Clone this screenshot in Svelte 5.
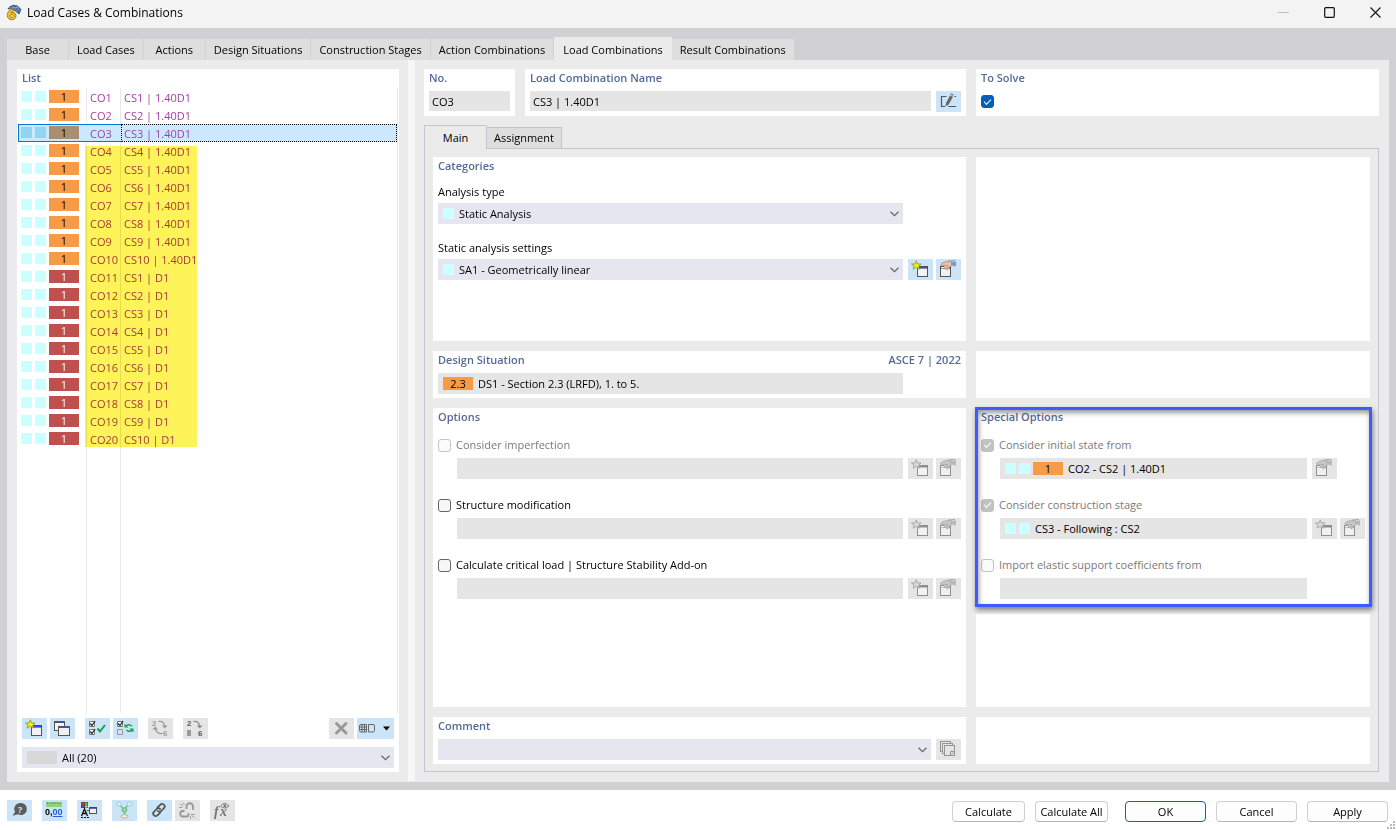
<script lang="ts">
  type Combo = { id: number; no: string; name: string; kind: 'uls' | 'sls' };

  const tabs = [
    'Base',
    'Load Cases',
    'Actions',
    'Design Situations',
    'Construction Stages',
    'Action Combinations',
    'Load Combinations',
    'Result Combinations'
  ];

  // ten strength combinations, then ten serviceability ones
  const combos: Combo[] = Array.from({ length: 20 }, (_, i) => ({
    id: i + 1,
    no: `CO${i + 1}`,
    name: i < 10 ? `CS${i + 1} | 1.40D1` : `CS${i - 9} | D1`,
    kind: i < 10 ? 'uls' : 'sls'
  }));

  const options = [
    { id: 'imperfection', label: 'Consider imperfection', disabled: true },
    { id: 'structure', label: 'Structure modification', disabled: false },
    { id: 'critical', label: 'Calculate critical load | Structure Stability Add-on', disabled: false }
  ];

  let activeTab = 'Load Combinations';
  let activeSub = 'Main';
  let selected = 3;
  let toSolve = true;

  $: current = combos.find(c => c.id === selected) ?? combos[0];
</script>

{#snippet chevron()}
  <svg class="chevron" width="10" height="6" viewBox="0 0 10 6"><path d="M1.5 .8 5.5 4.6 9.500 .8" fill="none" stroke="#666" stroke-width="1.2" /></svg>
{/snippet}

{#snippet iconNew(off = false)}
  <svg width="25" height="21" viewBox="0 0 25 21">
    <rect x="9.5" y="7.5" width="10" height="10" fill="#f2f2f2" stroke={off ? '#8f8f8f' : '#555'} />
    <path d="M9 8.5h11" stroke={off ? '#8f8f8f' : '#444'} stroke-width="2" />
    {#if !off}<path d="M12 8.5h7" stroke="#2f55e0" stroke-width="1.4" />{/if}
    <path d="M8.3 1.8 9.5 5h3.6l-2.4 2 1 3.2-3.4-2-3.2 2 1-3.2-2.6-2h3.6z" fill={off ? '#dcdcdc' : '#fff200'} stroke={off ? '#9d9d9d' : '#86903a'} stroke-width=".8" />
  </svg>
{/snippet}

{#snippet iconEdit(off = false)}
  <svg width="25" height="21" viewBox="0 0 25 21">
    <rect x="4.5" y="7.5" width="10" height="10" fill="#f0f0f0" stroke={off ? '#8f8f8f' : '#555'} />
    <path d="M4 8.5h11" stroke={off ? '#8f8f8f' : '#444'} stroke-width="2" />
    <path d="M5 8.5h3" stroke="#fff" />
    <path d="M4.500 5.500 7 3.500 10.500 2.500 15.500 2.800v4l-2.300 1.700-1 2-1.400.3-.8-1.700-1.500.5L7.600 7.600l1-1.400-2.600.6z" fill={off ? '#c6c6c6' : '#e6c1a4'} stroke={off ? '#a2a2a2' : '#a98068'} stroke-width=".7" />
    <path d="M9.500 6.500h2.500M10.500 8.200h2" stroke={off ? '#999' : '#a98068'} stroke-width=".6" />
    <path d="M15.700 3 20 2.200v5.300l-4.300-.9z" fill={off ? '#b8b8b8' : '#6f9ddb'} />
    <path d="M12 2 19 1.500" stroke={off ? '#999' : '#8a8a8a'} stroke-width=".8" />
  </svg>
{/snippet}

{#snippet swatches()}
  <span class="swatch"></span><span class="swatch"></span>
{/snippet}

<div class="window">
  <header class="titlebar">
    <svg class="logo" width="16" height="17" viewBox="0 0 16 17">
      <path d="M2 5C4 1.5 8 .5 11.5 2L15 5.5 13 10 9.5 7 5 4.5z" fill="#42699b" stroke="#2d3f58" stroke-width=".8" />
      <path d="M6 1.5 12 8M9.5 1.5 14.5 7.5M3.5 4 12.5 3.5" stroke="#9db7d6" stroke-width=".7" />
      <path d="M7.5 4.8C3 5.6 1 8.5 1.3 11.6 1.7 17 9.6 17.2 10 12c.2-3-2.5-4.2-5-3.4C5.7 7.4 6.7 6.8 8.3 6.8z" fill="#f2c21c" stroke="#8a6a10" stroke-width=".8" />
      <circle cx="5.7" cy="12" r="1.5" fill="#fff" stroke="#8a6a10" stroke-width=".8" />
    </svg>
    <h1>Load Cases &amp; Combinations</h1>
    <div class="win-buttons">
      <button aria-label="Minimize" disabled><svg width="11" height="11"><path d="M0 5.5h11" stroke="#bcbcbc" /></svg></button>
      <button aria-label="Maximize"><svg width="11" height="11"><rect x=".7" y=".7" width="9.600" height="9.6" rx="1" fill="none" stroke="#111" stroke-width="1.2" /></svg></button>
      <button aria-label="Close"><svg width="11" height="11"><path d="m.5.5 10 10M10.5.5l-10 10" stroke="#111" stroke-width="1.1" /></svg></button>
    </div>
  </header>

  <div class="body">
    <nav class="tabs">
      {#each tabs as tab (tab)}
        <button class:active={tab === activeTab} on:click={() => (activeTab = tab)}>{tab}</button>
      {/each}
    </nav>

    <div class="page">
      <section class="panel list">
        <h2>List</h2>
        <div class="list-scroll">
          <table>
            <tbody>
              {#each combos as c (c.id)}
                <tr class:selected={c.id === selected} on:click={() => (selected = c.id)}>
                  <td class="marks">
                    <div>{@render swatches()}<span class="badge {c.kind}">1</span></div>
                  </td>
                  <td class="no">{c.no}</td>
                  <td class="name">{c.name}</td>
                </tr>
              {/each}
            </tbody>
          </table>
          <div class="marker"></div>
        </div>

        <div class="toolbar">
          <button class="icon" aria-label="New">{@render iconNew()}</button>
          <button class="icon" aria-label="Copy">
            <svg width="25" height="21" viewBox="0 0 25 21">
              <rect x="4.5" y="3.5" width="10" height="9" fill="#f4f4f4" stroke="#555" />
              <path d="M4 4h11" stroke="#555" stroke-width="2" /><path d="M8 4h6" stroke="#2f55e0" stroke-width="1.2" />
              <rect x="8.5" y="8.5" width="11" height="9" fill="#f0f0f0" stroke="#555" />
              <path d="M8 9h12" stroke="#555" stroke-width="2" /><path d="M12 9h7" stroke="#2f55e0" stroke-width="1.2" />
            </svg>
          </button>
          <button class="icon split" aria-label="Select all">
            <svg width="25" height="21" viewBox="0 0 25 21" fill="none">
              <path d="M4.5 3.5h5v5h-5zM4.5 11.500h5v5h-5z" fill="#fff" stroke="#777" />
              <path d="M5 5.5 7 7.5 10 3M5 13.5l2 2 3-4.5" stroke="#222" stroke-width="1.2" />
              <path d="m12.5 10.5 2.5 3 5-6.5" stroke="#16a24a" stroke-width="2" />
            </svg>
          </button>
          <button class="icon" aria-label="Invert selection">
            <svg width="25" height="21" viewBox="0 0 25 21" fill="none">
              <path d="M4.5 3.5h5v5h-5z" fill="#fff" stroke="#777" /><path d="M4.5 11.5h5v5h-5z" stroke="#999" />
              <path d="M5 5.5 7 7.5 10 3" stroke="#222" stroke-width="1.2" />
              <path d="M13 8c1.500-1.600 4-1.500 6 .2M19 12.300c-1.500 1.200-3.500 1.200-5.500-.2" stroke="#16a24a" stroke-width="1.5" />
              <path d="M11.5 5.500v4h4zM20.500 14.500v-4h-4z" fill="#16a24a" />
            </svg>
          </button>
          <button class="icon split" aria-label="Renumber" disabled>
            <svg width="25" height="21" viewBox="0 0 25 21">
              <text x="4" y="8" class="num" fill="#999">2</text><text x="15" y="18" class="num" fill="#999">6</text>
              <path d="M10.5 3.5c4-.5 6 1.5 6 5.5M14.5 15.5c-4 .5-7-1.500-7-5.500" fill="none" stroke="#999" stroke-width="1.2" />
              <path d="M14 7.500h5.500L16.700 10.500zM4.500 11.500H10L7.300 8.500z" fill="#999" />
            </svg>
          </button>
          <button class="icon split" aria-label="Renumber selected" disabled>
            <svg width="25" height="21" viewBox="0 0 25 21">
              <text x="4" y="8" class="num" fill="#555">2</text><text x="15" y="18" class="num" fill="#555">6</text>
              <path d="M10.5 3.5c4-.5 6 1.5 6 5.5" fill="none" stroke="#8a8a8a" stroke-width="1.2" />
              <path d="M14 7.5h5.5L16.7 10.5z" fill="#8a8a8a" /><rect x="4" y="12" width="4" height="6" fill="#999" />
            </svg>
          </button>
          <span class="grow"></span>
          <button class="icon" aria-label="Delete" disabled>
            <svg width="25" height="21" viewBox="0 0 25 21"><path d="m7.5 5.5 9.5 9.500M17 5.500 7.500 15" stroke="#999" stroke-width="3" stroke-linecap="round" /></svg>
          </button>
          <button class="icon wide" aria-label="View">
            <svg width="37" height="21" viewBox="0 0 37 21" fill="none">
              <path d="M4 6.500h5.500V14H4Q2.500 14 2.500 12.500V8Q2.500 6.500 4 6.500M2.500 9h7M2.500 11.500h7M5 6.500V14M7.500 6.500V14" stroke="#666" />
              <path d="M11.5 6.500H16Q17.500 6.500 17.500 8v4.500Q17.500 14 16 14h-4.500z" stroke="#666" />
              <path d="M26 8.500h7L29.500 12.500z" fill="#000" />
            </svg>
          </button>
        </div>

        <div class="combo filter">
          <span class="badge none"></span>
          <select aria-label="Filter"><option>All (20)</option></select>
          {@render chevron()}
        </div>
      </section>

      <div class="splitter"></div>

      <main>
        <div class="row top">
          <div class="left">
            <section class="panel number">
              <h2><label for="co-no">No.</label></h2>
              <input id="co-no" class="field" readonly value={current.no} />
            </section>
            <section class="panel title">
              <h2><label for="co-name">Load Combination Name</label></h2>
              <div class="line">
                <input id="co-name" class="field" readonly value={current.name} />
                <button class="icon" aria-label="Edit name">
                  <svg width="25" height="21" viewBox="0 0 25 21" fill="none">
                    <path d="M10.5 5.5h-5v10H9M18.500 5.500H20M12.500 15.500h7.500" stroke="#555" stroke-width="1.2" />
                    <path d="m9.500 15.500.5-3.500 4-7.500 3 1.300-4.300 7.700z" fill="#666" /><path d="m14.300 3.800.7-1.600 2.600 1-.5 1.800z" fill="#888" />
                  </svg>
                </button>
              </div>
            </section>
          </div>
          <section class="panel">
            <h2><label for="to-solve">To Solve</label></h2>
            <input id="to-solve" class="solve" type="checkbox" bind:checked={toSolve} />
          </section>
        </div>

        <div class="subtabs">
          {#each ['Main', 'Assignment'] as sub (sub)}
            <button class:active={sub === activeSub} on:click={() => (activeSub = sub)}>{sub}</button>
          {/each}
        </div>

        <div class="pane">
          <section class="panel categories">
            <h2>Categories</h2>
            <div class="group">
              <label for="analysis">Analysis type</label>
              <div class="line">
                <div class="combo">
                  <span class="swatch"></span>
                  <select id="analysis"><option>Static Analysis</option></select>
                  {@render chevron()}
                </div>
                <span class="slot"></span><span class="slot"></span>
              </div>
            </div>
            <div class="group">
              <label for="settings">Static analysis settings</label>
              <div class="line">
                <div class="combo">
                  <span class="swatch"></span>
                  <select id="settings"><option>SA1 - Geometrically linear</option></select>
                  {@render chevron()}
                </div>
                <button class="icon" aria-label="New settings">{@render iconNew()}</button>
                <button class="icon" aria-label="Edit settings">{@render iconEdit()}</button>
              </div>
            </div>
          </section>
          <section class="panel"></section>

          <section class="panel">
            <h2>Design Situation <span>ASCE 7 | 2022</span></h2>
            <div class="line">
              <div class="value">
                <span class="badge uls">2.3</span>
                <input aria-label="Design Situation" readonly value="DS1 - Section 2.3 (LRFD), 1. to 5." />
              </div>
              <span class="slot"></span><span class="slot"></span>
            </div>
          </section>
          <section class="panel"></section>

          <section class="panel options">
            <h2>Options</h2>
            {#each options as o (o.id)}
              <div class="option">
                <label class:off={o.disabled}><input type="checkbox" disabled={o.disabled} />{o.label}</label>
                <div class="line indent">
                  <div class="value"><input aria-label={o.label} disabled /></div>
                  <button class="icon" aria-label="New" disabled>{@render iconNew(true)}</button>
                  <button class="icon" aria-label="Edit" disabled>{@render iconEdit(true)}</button>
                </div>
              </div>
            {/each}
          </section>
          <div class="stack">
            <section class="panel options special">
              <h2>Special Options</h2>
              <div class="option">
                <label class="off"><input type="checkbox" checked disabled />Consider initial state from</label>
                <div class="line indent">
                  <div class="value">
                    {@render swatches()}<span class="badge uls">1</span>
                    <input aria-label="Initial state" readonly value="CO2 - CS2 | 1.40D1" />
                  </div>
                  <button class="icon" aria-label="Edit" disabled>{@render iconEdit(true)}</button>
                  <span class="slot"></span>
                </div>
              </div>
              <div class="option">
                <label class="off"><input type="checkbox" checked disabled />Consider construction stage</label>
                <div class="line indent">
                  <div class="value">
                    {@render swatches()}
                    <input aria-label="Construction stage" readonly value="CS3 - Following : CS2" />
                  </div>
                  <button class="icon" aria-label="New" disabled>{@render iconNew(true)}</button>
                  <button class="icon" aria-label="Edit" disabled>{@render iconEdit(true)}</button>
                </div>
              </div>
              <div class="option">
                <label class="off"><input type="checkbox" disabled />Import elastic support coefficients from</label>
                <div class="line indent">
                  <div class="value"><input aria-label="Elastic support" disabled /></div>
                  <span class="slot"></span><span class="slot"></span>
                </div>
              </div>
              <div class="frame"></div>
            </section>
            <section class="panel grow"></section>
          </div>

          <section class="panel">
            <h2><label for="comment">Comment</label></h2>
            <div class="line">
              <div class="combo">
                <select id="comment"><option></option></select>
                {@render chevron()}
              </div>
              <button class="icon" aria-label="Comment library" disabled>
                <svg width="25" height="21" viewBox="0 0 25 21" fill="#e5e5e5" stroke="#949494">
                  <rect x="4.5" y="2.5" width="10" height="10" /><rect x="6.5" y="4.5" width="10" height="10" />
                  <rect x="8.5" y="6.5" width="10" height="10" /><path d="M14.5 16.5v-4h4M15.5 15.5l2-2" />
                </svg>
              </button>
            </div>
          </section>
          <section class="panel"></section>
        </div>
      </main>
    </div>
  </div>

  <footer>
    <button class="icon" aria-label="Help">
      <svg width="25" height="21" viewBox="0 0 25 21"><path d="M13.500 3a6 6 0 1 1-2.500 11.200L5.500 15.800 8 12A6 6 0 0 1 13.500 3z" fill="#5c5c5c" /><text x="11" y="13" class="help" fill="#cce4f7">?</text></svg>
    </button>
    <button class="icon split" aria-label="Units">
      <svg width="25" height="21" viewBox="0 0 25 21">
        <rect x="4" y="2" width="16" height="5" fill="#8fd47b" /><path d="M5.5 2v2M8 2v2M10.5 2v2M13 2v2M15.5 2v2M18 2v2" stroke="#4c9440" stroke-width=".8" />
        <text x="3" y="15" class="units">0,<tspan fill="#1f5fe0">00</tspan></text><path d="M11 16.500h9.500" stroke="#1f5fe0" />
      </svg>
    </button>
    <button class="icon split" aria-label="Display">
      <svg width="25" height="21" viewBox="0 0 25 21">
        <path d="M4 2h7v6H4z" fill="#444" /><path d="M4.500 2.500h3v2.500h-3z" fill="#f22" /><path d="M8 2.500h2.500V5H8z" fill="#2d2" /><path d="M4.500 5.500h3v2h-3z" fill="#25f" /><path d="M8 5.500h2.500v2H8z" fill="#fd0" />
        <path d="m4.500 16 3-7 3 7M5.500 13.500h4" fill="none" stroke="#111" stroke-width="1.3" /><path d="M4 17.500h8" stroke="#111" stroke-dasharray="2 1" />
        <path d="M10 10.500h2.500" stroke="#555" /><rect x="12.5" y="7.5" width="7" height="6" fill="#eee" stroke="#555" /><path d="M12 8h8" stroke="#333b8a" stroke-width="1.5" />
      </svg>
    </button>
    <button class="icon split" aria-label="Relations">
      <svg width="25" height="21" viewBox="0 0 25 21">
        <path d="m8 5 4 5 4-5M12.5 10v5" fill="none" stroke="#7fb98d" stroke-width="1.3" />
        <ellipse cx="7" cy="4" rx="2.500" ry="2" fill="#d9f3f3" stroke="#8cc" stroke-width=".8" /><ellipse cx="17.5" cy="4" rx="2.5" ry="2" fill="#d9f3f3" stroke="#8cc" stroke-width=".8" />
        <circle cx="12.5" cy="10" r="2.4" fill="#8fe08c" stroke="#5a9" stroke-width=".8" /><ellipse cx="12.5" cy="16.3" rx="3.5" ry="1.7" fill="#f4efcf" stroke="#a9a583" stroke-width=".8" />
      </svg>
    </button>
    <button class="icon split" aria-label="Link">
      <svg width="25" height="21" viewBox="0 0 25 21" fill="none" stroke="#555" stroke-width="1.8" stroke-linecap="round">
        <path d="m10.5 7.5 2.700-2.700a2.600 2.600 0 0 1 4 .2c.8 1 .7 2.300-.2 3.200l-2.700 2.800c-1 1-2.600 1-3.500 0" />
        <path d="m13.300 12.500-2.600 2.700a2.600 2.600 0 0 1-4-.2c-.8-1-.7-2.300.2-3.200l2.700-2.800c1-1 2.500-1 3.500 0" />
      </svg>
    </button>
    <button class="icon" aria-label="Unlink" disabled>
      <svg width="25" height="21" viewBox="0 0 25 21" fill="none" stroke="#999" stroke-width="1.8">
        <path d="M11.500 9V6.500a3 3 0 0 1 6.500 0V10M9.500 11H8a2.600 2.600 0 0 0 0 5.500h3.500a2 2 0 0 0 2-2V13" />
        <path d="m5 4 3 2M4 7.500h3.500M8 2.500l1.500 2.500M20 14.500h-4M19.500 17.500l-3-2M15.500 19v-3" stroke-width=".9" />
      </svg>
    </button>
    <button class="icon split" aria-label="Formula" disabled>
      <svg width="25" height="21" viewBox="0 0 25 21">
        <text x="4" y="16" class="fx" fill="#777">f</text><text x="10" y="16" class="fx" fill="#777">x</text>
        <path d="M10.500 6q4-5 8.500 0-4.500 4-8.500 0z" fill="#eee" stroke="#777" /><circle cx="14.800" cy="5.700" r="1.500" fill="#777" />
      </svg>
    </button>
    <span class="grow"></span>
    <button class="push">Calculate</button>
    <button class="push">Calculate All</button>
    <button class="push big primary">OK</button>
    <button class="push big">Cancel</button>
    <button class="push big">Apply</button>
    <svg class="grip" width="8" height="8" fill="#bbb"><path d="M6 0h2v2H6zM3 3h2v2H3zM6 3h2v2H6zM0 6h2v2H0zM3 6h2v2H3zM6 6h2v2H6z" /></svg>
  </footer>
</div>

<style>
  :global(body) { margin: 0; }
  * { box-sizing: border-box; }

  .window {
    display: flex; flex-direction: column; min-height: 100vh;
    font-family: "Open Sans", "Noto Sans", sans-serif; font-size: 11px; line-height: 18px;
    color: #000; background: #fff;
  }
  button, input, select { font: inherit; color: inherit; margin: 0; padding: 0; border: 0; border-radius: 0; }
  h1, h2 { margin: 0; }

  .titlebar { display: flex; align-items: center; height: 28px; padding: 0 3px 3px 6px; background: #f3f3f3; }
  .titlebar h1 { margin-left: 5px; font-size: 12px; font-weight: 400; }
  .win-buttons { display: flex; gap: 10px; margin-left: auto; }
  .win-buttons button { display: grid; place-items: center; width: 36px; height: 24px; background: none; }

  .body { display: flex; flex-direction: column; flex: 1; padding: 9px 7px 8px; background: #d1d0d5; }
  .tabs { display: flex; align-items: flex-end; }
  .tabs button { min-width: 62px; height: 21px; padding: 0 8px; background: #dedede; border-right: 1px solid #d3d3d3; }
  .tabs button.active { height: 23px; padding: 2px 9px 0; background: #ebebeb; border: 0; }

  .page { display: flex; flex: 1; background: #ebebeb; }
  .panel { background: #fff; padding: 0 5px 4px; min-width: 0; }
  h2 { display: flex; justify-content: space-between; margin-bottom: 4px; font-size: 11px; font-weight: 600; line-height: 18px; color: #566a96; }
  .grow { flex: 1; }

  .list { display: flex; flex-direction: column; flex: 0 0 382px; margin: 9px 9px 10px 10px; }
  .list h2 { margin: 0 0 1px; }
  .list-scroll {
    position: relative; flex: 1; margin: 0 -4px;
    background: linear-gradient(#e8e8e8, #e8e8e8) 68px 0 / 1px 100% no-repeat, linear-gradient(#e8e8e8, #e8e8e8) 102px 0 / 1px 100% no-repeat;
    border-right: 1px solid #e8e8e8;
  }
  table { width: 100%; border-collapse: collapse; table-layout: fixed; color: #a53ea5; }
  td { padding: 0; height: 18px; line-height: 16px; white-space: nowrap; }
  .marks { width: 69px; }
  .marks div { display: flex; align-items: center; gap: 3px; height: 18px; padding: 0 0 2px 3px; }
  .no { width: 34px; padding: 2px 0 0 3px; }
  .name { padding: 2px 0 0 3px; }
  .selected td { background: #cce8ff; box-shadow: inset 0 1px #0078d7, inset 0 -1px #0078d7; }
  .selected .marks { box-shadow: inset 0 1px #0078d7, inset 0 -1px #0078d7, inset 1px 0 #0078d7; }
  .selected .name { box-shadow: none; outline: 1px dotted #000; outline-offset: -1px; }
  .selected .swatch { background: #91d5f5; }
  .selected .badge { background: #aa8e70; }
  .marker { position: absolute; left: 67px; top: 58px; width: 112px; height: 301px; background: #fff35a; mix-blend-mode: multiply; pointer-events: none; }

  .swatch { flex: none; width: 11px; height: 11px; background: #ccffff; }
  .badge { flex: none; width: 30px; height: 13px; line-height: 13px; text-align: center; color: #000; }
  .uls { background: #f79b46; }
  .sls { background: #c0504d; color: #fff; }
  .none { background: #d8d8d8; }

  .toolbar { display: flex; gap: 3px; margin: 5px 0 8px; }
  .icon { flex: none; width: 25px; height: 21px; background: #cce4f7; }
  .icon:disabled { background: #e5e5e5; }
  .icon svg { display: block; }
  .icon.wide { width: 37px; }
  .toolbar .split, footer .split { margin-left: 7px; }
  .num { font: 700 8px "Liberation Sans", sans-serif; }

  .combo, .value { display: flex; align-items: center; flex: 1; gap: 3px; height: 21px; padding: 0 5px; min-width: 0; background: #e6e6f1; }
  .combo { padding-right: 4px; }
  .value { background: #e5e5e5; }
  .combo select, .value input { flex: 1; min-width: 0; height: 21px; padding-left: 2px; appearance: none; background: none; }
  .filter { flex: none; }
  .chevron { flex: none; pointer-events: none; }
  .field { width: 100%; height: 20px; padding: 0 3px; background: #e5e5e5; }

  .splitter { width: 7px; margin-bottom: 1px; background: #f7f7f7; }

  main { display: flex; flex-direction: column; flex: 1; min-width: 0; padding: 9px 10px 10px 9px; }
  .row { display: grid; grid-template-columns: 542fr 403fr; gap: 10px; height: 47px; }
  .left { display: flex; gap: 10px; min-width: 0; }
  .number { flex: 0 0 91px; }
  .title { flex: 1; }
  .line { display: flex; gap: 3px; }
  .line > :nth-last-child(3), .title .field, .combo:nth-last-child(2) { margin-right: 2px; }
  .slot { flex: none; width: 25px; }

  input[type='checkbox'] {
    appearance: none; flex: none; width: 13px; height: 13px; margin: 0 5px 0 0;
    background: #f7f7f7; border: 1px solid #666; border-radius: 3px;
  }
  input[type='checkbox']:disabled { border-color: #c4c4c4; background: #fbfbfb; }
  input[type='checkbox']:checked { display: grid; place-items: center; border-color: #005fb8; background: #005fb8; }
  input[type='checkbox']:checked::after { content: ''; width: 6px; height: 3px; margin-bottom: 2px; border: solid #fff; border-width: 0 0 1px 1px; transform: rotate(-45deg); }
  input[type='checkbox']:checked:disabled { border-color: #c2c2c2; background: #c2c2c2; }
  .panel .solve { margin-top: 8px; }

  .subtabs { display: flex; align-items: flex-end; height: 23px; margin-top: 9px; }
  .subtabs button { height: 21px; padding: 0 7px; background: #dedede; border: 1px solid #c5c4d2; border-width: 1px 1px 0 0; }
  .subtabs button.active { position: relative; min-width: 63px; height: 24px; margin-bottom: -1px; background: #ebebeb; border-width: 1px 1px 0 1px; }
  .pane {
    display: grid; grid-template-columns: 533fr 394fr; grid-template-rows: minmax(184px, auto) 47px 1fr 47px;
    gap: 10px; flex: 1; padding: 8px 8px 7px; border: 1px solid #c5c4d2;
  }

  .group { padding-top: 4px; margin-bottom: 11px; }
  .group > label { display: block; margin-bottom: 2px; }
  .option { padding-top: 6px; margin-bottom: 11px; }
  .option label { display: flex; align-items: center; height: 18px; margin-bottom: 4px; }
  .off { color: #7a7a7a; }
  .indent { padding-left: 19px; }
  .stack { display: flex; flex-direction: column; gap: 10px; min-width: 0; }
  .special { position: relative; padding-bottom: 0; }
  .special .option:nth-last-child(2) { margin-bottom: 5px; }
  .frame { position: absolute; inset: -1px -2px -3px -1px; border: 3px solid #3f5bff; box-shadow: 1px 3px 5px rgba(0, 0, 0, .45), inset 1px 3px 5px rgba(0, 0, 0, .4); pointer-events: none; }

  footer { position: relative; display: flex; align-items: flex-start; gap: 3px; height: 40px; padding: 10px 8px 0 7px; }
  .push { width: 73px; height: 21px; margin: 1px 0 0 7px; background: #fdfdfd; border: 1px solid #d0d0d0; border-bottom-color: #b8b8b8; border-radius: 4px; white-space: nowrap; }
  .big { width: 81px; }
  .primary { margin-left: 14px; border-color: #0067c0; }
  .help { font: 700 9px "Open Sans", sans-serif; }
  .units { font: 700 9px "Liberation Sans", sans-serif; }
  .fx { font: italic 700 14px "Liberation Serif", serif; }
  .grip { position: absolute; right: 1px; bottom: 1px; }
</style>
